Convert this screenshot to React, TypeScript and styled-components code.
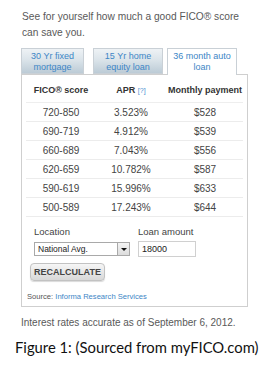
import React from "react";
import styled, { createGlobalStyle } from "styled-components";

const Global = createGlobalStyle`
  html, body { margin: 0; padding: 0; background: #fff; }
  body { font-family: "Liberation Sans", Arial, sans-serif; }
  * { box-sizing: border-box; }
`;

const Page = styled.div`
  width: 275px;
  height: 367px;
  overflow: hidden;
  padding-top: 9px;
`;

const Intro = styled.p`
  margin: 0 0 0 22px;
  width: 224px;
  font-size: 10.2px;
  line-height: 16px;
  color: #595959;
`;

const Widget = styled.div`
  margin-left: 21px;
  margin-top: 7px;
  width: 227px;
`;

const TabRow = styled.div`
  display: flex;
  align-items: flex-end;
  height: 26px;
  position: relative;
  z-index: 1;
`;

const Tab = styled.div<{ $w: number; $gap: number; $active?: boolean }>`
  width: ${(p) => p.$w}px;
  margin-left: ${(p) => p.$gap}px;
  height: ${(p) => (p.$active ? 27 : 26)}px;
  margin-bottom: ${(p) => (p.$active ? -1 : 0)}px;
  border: 1px solid #c9d0d6;
  border-bottom: ${(p) => (p.$active ? "none" : "1px solid #c9d0d6")};
  background: ${(p) =>
    p.$active ? "#fff" : "linear-gradient(#eef2f5 0%, #dbe4ea 45%, #bccbd6 100%)"};
  color: #3d86c6;
  font-size: 9px;
  line-height: 10.5px;
  text-align: center;
  padding-top: 2px;
`;

const Panel = styled.div`
  border: 1px solid #cfcfcf;
  height: 233px;
  padding: 0 4px;
  display: flex;
  flex-direction: column;
`;

const Table = styled.div`
  display: flex;
  flex-direction: column;
`;

const HeadRow = styled.div`
  display: grid;
  grid-template-columns: 70px 70px 78px;
  height: 28px;
  padding-top: 10px;
  font-size: 9px;
  font-weight: bold;
  color: #333;
  text-align: center;
  white-space: nowrap;
  border-bottom: 1px solid #eee;
`;

const Help = styled.span`
  color: #4a8fd0;
  font-weight: normal;
  font-size: 7px;
`;

const Row = styled.div`
  display: grid;
  grid-template-columns: 70px 70px 78px;
  height: 19px;
  align-items: center;
  border-bottom: 1px solid #ececec;
  font-size: 10px;
  color: #444;
  text-align: center;
`;

const Form = styled.div`
  display: flex;
  gap: 8px;
  padding: 9px 0 0 8px;
`;

const Field = styled.div`
  display: flex;
  flex-direction: column;
  gap: 3px;
`;

const Label = styled.div`
  font-size: 9.5px;
  color: #444;
  line-height: 12px;
`;

const Select = styled.div`
  width: 96px;
  height: 14px;
  margin-top: 1px;
  border: 1px solid #a9a9a9;
  display: flex;
  align-items: center;
  justify-content: space-between;
  font-size: 8.5px;
  color: #222;
  padding-left: 3px;
`;

const Arrow = styled.div`
  width: 12px;
  height: 12px;
  border-left: 1px solid #a9a9a9;
  background: linear-gradient(#f4f4f4, #dcdcdc);
  display: flex;
  align-items: center;
  justify-content: center;
  &::after {
    content: "";
    border-left: 3px solid transparent;
    border-right: 3px solid transparent;
    border-top: 3px solid #111;
  }
`;

const Input = styled.div`
  width: 58px;
  height: 16px;
  border: 1px solid #d0d0d0;
  font-size: 9px;
  color: #222;
  padding: 2px 0 0 3px;
`;

const Button = styled.div`
  margin: 6px 0 0 4px;
  width: 75px;
  height: 18px;
  border: 1px solid #c2c2c2;
  border-radius: 4px;
  background: linear-gradient(#f6f6f6, #d8d8d8);
  box-shadow: 0 1px 1px rgba(0, 0, 0, 0.15);
  font-size: 9px;
  font-weight: bold;
  color: #444;
  text-align: center;
  line-height: 16px;
`;

const Source = styled.div`
  margin: 11px 0 0 1px;
  font-size: 7.6px;
  color: #555;
`;

const SourceLink = styled.span`
  color: #3d86c6;
`;

const Note = styled.p`
  margin: 10px 0 0 21px;
  font-size: 10px;
  color: #595959;
  line-height: 12px;
`;

const Caption = styled.p`
  margin: 8px 0 0 15px;
  font-family: Lato, "Open Sans", sans-serif;
  font-size: 14.8px;
  line-height: 20px;
  color: #111;
  white-space: nowrap;
`;

const rows = [
  ["720-850", "3.523%", "$528"],
  ["690-719", "4.912%", "$539"],
  ["660-689", "7.043%", "$556"],
  ["620-659", "10.782%", "$587"],
  ["590-619", "15.996%", "$633"],
  ["500-589", "17.243%", "$644"],
];

export default function App() {
  return (
    <Page>
      <Global />
      <Intro>See for yourself how much a good FICO® score can save you.</Intro>
      <Widget>
        <TabRow>
          <Tab $w={63} $gap={0}>30 Yr fixed<br />mortgage</Tab>
          <Tab $w={70} $gap={9}>15 Yr home<br />equity loan</Tab>
          <Tab $w={70} $gap={4} $active>36 month auto<br />loan</Tab>
        </TabRow>
        <Panel>
          <Table>
            <HeadRow>
              <div>FICO® score</div>
              <div>APR <Help>[?]</Help></div>
              <div>Monthly payment</div>
            </HeadRow>
            {rows.map((r) => (
              <Row key={r[0]}>
                <div>{r[0]}</div>
                <div>{r[1]}</div>
                <div>{r[2]}</div>
              </Row>
            ))}
          </Table>
          <Form>
            <Field>
              <Label>Location</Label>
              <Select>
                National Avg.
                <Arrow />
              </Select>
            </Field>
            <Field>
              <Label>Loan amount</Label>
              <Input>18000</Input>
            </Field>
          </Form>
          <Button>RECALCULATE</Button>
          <Source>
            Source: <SourceLink>Informa Research Services</SourceLink>
          </Source>
        </Panel>
      </Widget>
      <Note>Interest rates accurate as of September 6, 2012.</Note>
      <Caption>Figure 1: (Sourced from myFICO.com)</Caption>
    </Page>
  );
}
